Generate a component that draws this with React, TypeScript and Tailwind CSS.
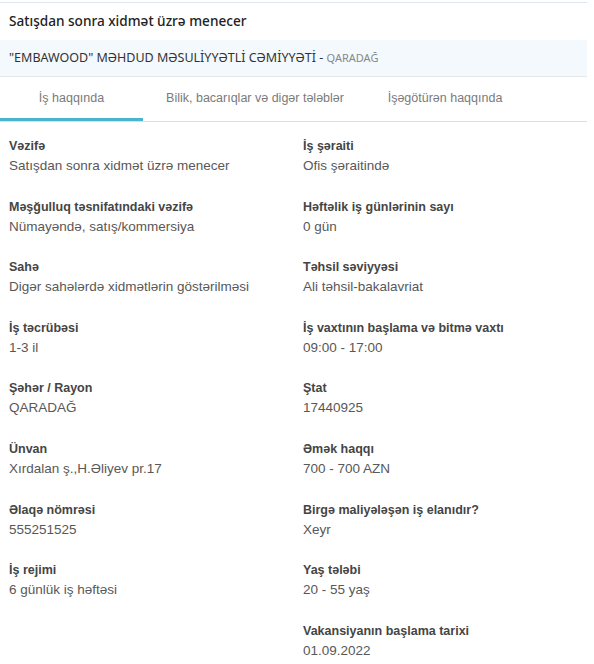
import { useState } from "react";

type Field = {
  label: string;
  value: string;
};

const leftFields: Field[] = [
  { label: "Vəzifə", value: "Satışdan sonra xidmət üzrə menecer" },
  { label: "Məşğulluq təsnifatındaki vəzifə", value: "Nümayəndə, satış/kommersiya" },
  { label: "Sahə", value: "Digər sahələrdə xidmətlərin göstərilməsi" },
  { label: "İş təcrübəsi", value: "1-3 il" },
  { label: "Şəhər / Rayon", value: "QARADAĞ" },
  { label: "Ünvan", value: "Xırdalan ş.,H.Əliyev pr.17" },
  { label: "Əlaqə nömrəsi", value: "555251525" },
  { label: "İş rejimi", value: "6 günlük iş həftəsi" },
];

const rightFields: Field[] = [
  { label: "İş şəraiti", value: "Ofis şəraitində" },
  { label: "Həftəlik iş günlərinin sayı", value: "0 gün" },
  { label: "Təhsil səviyyəsi", value: "Ali təhsil-bakalavriat" },
  { label: "İş vaxtının başlama və bitmə vaxtı", value: "09:00 - 17:00" },
  { label: "Ştat", value: "17440925" },
  { label: "Əmək haqqı", value: "700 - 700 AZN" },
  { label: "Birgə maliyələşən iş elanıdır?", value: "Xeyr" },
  { label: "Yaş tələbi", value: "20 - 55 yaş" },
  { label: "Vakansiyanın başlama tarixi", value: "01.09.2022" },
];

const tabs = [
  { label: "İş haqqında", width: "w-[143px]" },
  { label: "Bilik, bacarıqlar və digər tələblər", width: "w-[224px]" },
  { label: "İşəgötürən haqqında", width: "w-[156px]" },
];

function InfoField({ field }: { field: Field }) {
  return (
    <div>
      <div className="text-[12.5px] font-bold leading-5 text-[#454545]">{field.label}</div>
      <div className="text-[13.5px] leading-5 text-[#585858]">{field.value}</div>
    </div>
  );
}

export default function App() {
  const [active, setActive] = useState(0);

  return (
    <div className="h-[664px] w-[594px] bg-white pt-[2px] font-['Liberation_Sans',Arial,sans-serif]">
      <div className="w-[587px] border-t border-[#dde6ec]">
        <div className="flex h-[37px] items-center px-[9px] font-['Noto_Sans',sans-serif] text-[13.6px] font-medium text-[#222]">
          Satışdan sonra xidmət üzrə menecer
        </div>
        <div className="flex h-[37px] items-center border-b border-[#e3e8ec] bg-[#f3f9fd] px-[9px] font-['Noto_Sans',sans-serif] text-[12.5px] text-[#333]">
          "EMBAWOOD" MƏHDUD MƏSULİYYƏTLİ CƏMİYYƏTİ -&nbsp;
          <span className="text-[11px] text-[#888]">QARADAĞ</span>
        </div>
        <div className="flex h-[45px] border-b border-[#dedede]">
          {tabs.map((tab, i) => (
            <button
              key={tab.label}
              onClick={() => setActive(i)}
              className={`${tab.width} flex items-center justify-center border-b-[3px] pt-[2px] text-[12.5px] text-[#7a7a7a] ${
                active === i ? "border-[#4bb3cc]" : "border-transparent"
              }`}
            >
              {tab.label}
            </button>
          ))}
        </div>
        <div className="grid grid-cols-[294px_1fr] px-[9px] pt-[14px]">
          <div className="flex flex-col gap-y-[20.6px]">
            {leftFields.map((f) => (
              <InfoField key={f.label} field={f} />
            ))}
          </div>
          <div className="flex flex-col gap-y-[20.6px]">
            {rightFields.map((f) => (
              <InfoField key={f.label} field={f} />
            ))}
          </div>
        </div>
      </div>
    </div>
  );
}
